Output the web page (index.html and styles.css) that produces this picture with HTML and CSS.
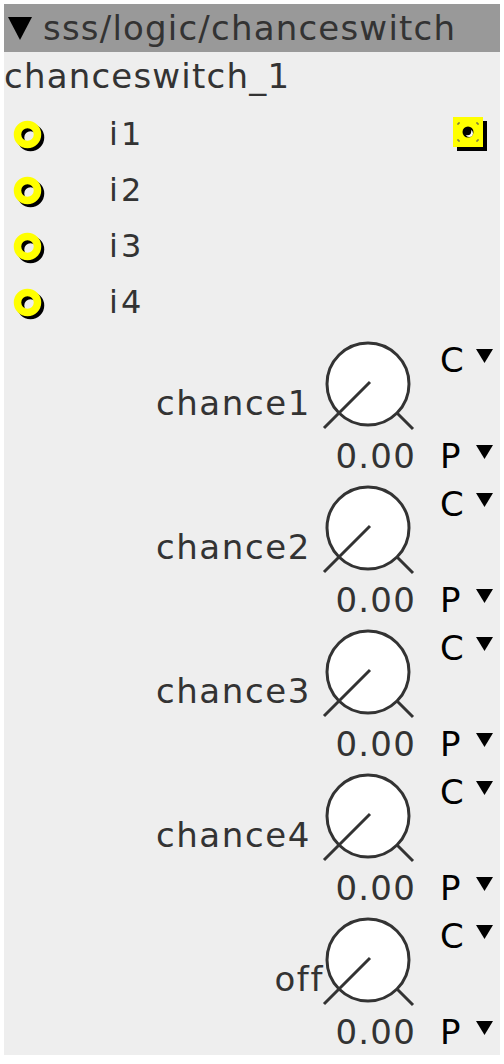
FILE: index.html
```html
<!DOCTYPE html>
<html lang="en">
<head>
    <meta charset="UTF-8">
    <meta name="viewport" content="width=device-width, initial-scale=1.0">
    <title>sss/logic/chanceswitch</title>
    <link rel="stylesheet" href="styles.css">
</head>
<body>
<div class="object">
    <div class="title">
        <svg class="title-arrow" viewBox="0 0 24 23"><polygon points="0,0 24,0 12,23" fill="#000"/></svg>
        <span>sss/logic/chanceswitch</span>
    </div>
    <div class="instance">chanceswitch_1</div>

    <div class="ports">
        <div class="inlets">
            <div class="inlet">
                <svg class="jack" viewBox="0 0 40 40"><circle cx="21.5" cy="21.5" r="10" fill="none" stroke="#000" stroke-width="7.5"/><circle cx="18.5" cy="18.5" r="10" fill="none" stroke="#ff0" stroke-width="7.5"/></svg>
                <span class="port-name">i1</span>
            </div>
            <div class="inlet">
                <svg class="jack" viewBox="0 0 40 40"><circle cx="21.5" cy="21.5" r="10" fill="none" stroke="#000" stroke-width="7.5"/><circle cx="18.5" cy="18.5" r="10" fill="none" stroke="#ff0" stroke-width="7.5"/></svg>
                <span class="port-name">i2</span>
            </div>
            <div class="inlet">
                <svg class="jack" viewBox="0 0 40 40"><circle cx="21.5" cy="21.5" r="10" fill="none" stroke="#000" stroke-width="7.5"/><circle cx="18.5" cy="18.5" r="10" fill="none" stroke="#ff0" stroke-width="7.5"/></svg>
                <span class="port-name">i3</span>
            </div>
            <div class="inlet">
                <svg class="jack" viewBox="0 0 40 40"><circle cx="21.5" cy="21.5" r="10" fill="none" stroke="#000" stroke-width="7.5"/><circle cx="18.5" cy="18.5" r="10" fill="none" stroke="#ff0" stroke-width="7.5"/></svg>
                <span class="port-name">i4</span>
            </div>
        </div>
        <!-- outlet o -->
        <svg class="outlet" viewBox="0 0 36 36">
            <rect x="4" y="4" width="30" height="30" fill="#000"/>
            <rect x="0" y="0" width="30" height="30" fill="#ff0"/>
            <path d="M5 8 V6 H7 M23 6 H25 V8 M5 22 V24 H7 M25 22 V24 H23" fill="none" stroke="#555" stroke-width="1"/>
            <circle cx="15" cy="15" r="5.5" fill="#000"/>
            <circle cx="16.3" cy="16.3" r="3.6" fill="#fff"/>
            <circle cx="14.6" cy="14.6" r="3.6" fill="#000"/>
        </svg>
    </div>

    <div class="params">
        <div class="param">
            <div class="param-label">chance1</div>
            <div class="dial">
                <svg class="knob" viewBox="0 0 96 96"><circle cx="48" cy="46" r="41" fill="#fff" stroke="#333" stroke-width="3"/><path d="M77 75 L93 91 M50 44 L4 90" stroke="#333" stroke-width="3" fill="none"/></svg>
                <div class="value">0.00</div>
            </div>
            <div class="modes">
                <div class="mode"><span>C</span><svg class="mode-arrow" viewBox="0 0 17 14"><polygon points="0,0 17,0 8.5,14" fill="#000"/></svg></div>
                <div class="mode"><span>P</span><svg class="mode-arrow" viewBox="0 0 17 14"><polygon points="0,0 17,0 8.5,14" fill="#000"/></svg></div>
            </div>
        </div>
        <div class="param">
            <div class="param-label">chance2</div>
            <div class="dial">
                <svg class="knob" viewBox="0 0 96 96"><circle cx="48" cy="46" r="41" fill="#fff" stroke="#333" stroke-width="3"/><path d="M77 75 L93 91 M50 44 L4 90" stroke="#333" stroke-width="3" fill="none"/></svg>
                <div class="value">0.00</div>
            </div>
            <div class="modes">
                <div class="mode"><span>C</span><svg class="mode-arrow" viewBox="0 0 17 14"><polygon points="0,0 17,0 8.5,14" fill="#000"/></svg></div>
                <div class="mode"><span>P</span><svg class="mode-arrow" viewBox="0 0 17 14"><polygon points="0,0 17,0 8.5,14" fill="#000"/></svg></div>
            </div>
        </div>
        <div class="param">
            <div class="param-label">chance3</div>
            <div class="dial">
                <svg class="knob" viewBox="0 0 96 96"><circle cx="48" cy="46" r="41" fill="#fff" stroke="#333" stroke-width="3"/><path d="M77 75 L93 91 M50 44 L4 90" stroke="#333" stroke-width="3" fill="none"/></svg>
                <div class="value">0.00</div>
            </div>
            <div class="modes">
                <div class="mode"><span>C</span><svg class="mode-arrow" viewBox="0 0 17 14"><polygon points="0,0 17,0 8.5,14" fill="#000"/></svg></div>
                <div class="mode"><span>P</span><svg class="mode-arrow" viewBox="0 0 17 14"><polygon points="0,0 17,0 8.5,14" fill="#000"/></svg></div>
            </div>
        </div>
        <div class="param">
            <div class="param-label">chance4</div>
            <div class="dial">
                <svg class="knob" viewBox="0 0 96 96"><circle cx="48" cy="46" r="41" fill="#fff" stroke="#333" stroke-width="3"/><path d="M77 75 L93 91 M50 44 L4 90" stroke="#333" stroke-width="3" fill="none"/></svg>
                <div class="value">0.00</div>
            </div>
            <div class="modes">
                <div class="mode"><span>C</span><svg class="mode-arrow" viewBox="0 0 17 14"><polygon points="0,0 17,0 8.5,14" fill="#000"/></svg></div>
                <div class="mode"><span>P</span><svg class="mode-arrow" viewBox="0 0 17 14"><polygon points="0,0 17,0 8.5,14" fill="#000"/></svg></div>
            </div>
        </div>
        <div class="param">
            <div class="param-label short">off</div>
            <div class="dial">
                <svg class="knob" viewBox="0 0 96 96"><circle cx="48" cy="46" r="41" fill="#fff" stroke="#333" stroke-width="3"/><path d="M77 75 L93 91 M50 44 L4 90" stroke="#333" stroke-width="3" fill="none"/></svg>
                <div class="value">0.00</div>
            </div>
            <div class="modes">
                <div class="mode"><span>C</span><svg class="mode-arrow" viewBox="0 0 17 14"><polygon points="0,0 17,0 8.5,14" fill="#000"/></svg></div>
                <div class="mode"><span>P</span><svg class="mode-arrow" viewBox="0 0 17 14"><polygon points="0,0 17,0 8.5,14" fill="#000"/></svg></div>
            </div>
        </div>
    </div>
</div>
</body>
</html>
```

FILE: styles.css
```css
body {
    margin: 0;
    padding: 4px;
    background: #fff;
    font-family: "DejaVu Sans", sans-serif;
    font-size: 34px;
    letter-spacing: 1.2px;
    color: #333;
}
.object {
    width: 496px;
    background: #eee;
}
.title {
    display: flex;
    align-items: center;
    height: 48px;
    background: #999;
}
.title-arrow {
    width: 24px;
    height: 23px;
    margin: 0 11px 0 4px;
}
.instance {
    height: 48px;
    line-height: 48px;
}
.ports {
    display: flex;
    align-items: flex-start;
    padding-top: 6px;
}
.inlets {
    flex: 1;
}
.inlet {
    display: flex;
    align-items: center;
    height: 56px;
    padding-left: 5px;
}
.jack {
    width: 40px;
    height: 40px;
    margin-top: 4px;
}
.port-name {
    margin-left: 60px;
    font-size: 32px;
    letter-spacing: 3px;
}
.outlet {
    width: 36px;
    height: 36px;
    margin: 11px 11px 0 0;
}
.params {
    padding-top: 5px;
}
.param {
    display: flex;
    justify-content: flex-end;
    height: 144px;
    padding-right: 7px;
}
.param-label {
    line-height: 40px;
    margin: 48px 9px 0 0;
    letter-spacing: 1.6px;
}
.param-label.short {
    margin-right: -4px;
}
.dial {
    width: 96px;
    display: flex;
    flex-direction: column;
}
.knob {
    width: 96px;
    height: 96px;
    margin-top: 3px;
}
.value {
    line-height: 40px;
    margin-top: 2px;
    text-align: right;
}
.modes {
    width: 53px;
    margin-left: 24px;
    padding-top: 5px;
    display: flex;
    flex-direction: column;
    gap: 56px;
    color: #000;
}
.mode {
    display: flex;
    justify-content: space-between;
    align-items: flex-start;
    line-height: 40px;
    letter-spacing: 0;
}
.mode-arrow {
    width: 17px;
    height: 14px;
    margin-top: 9px;
}
```
